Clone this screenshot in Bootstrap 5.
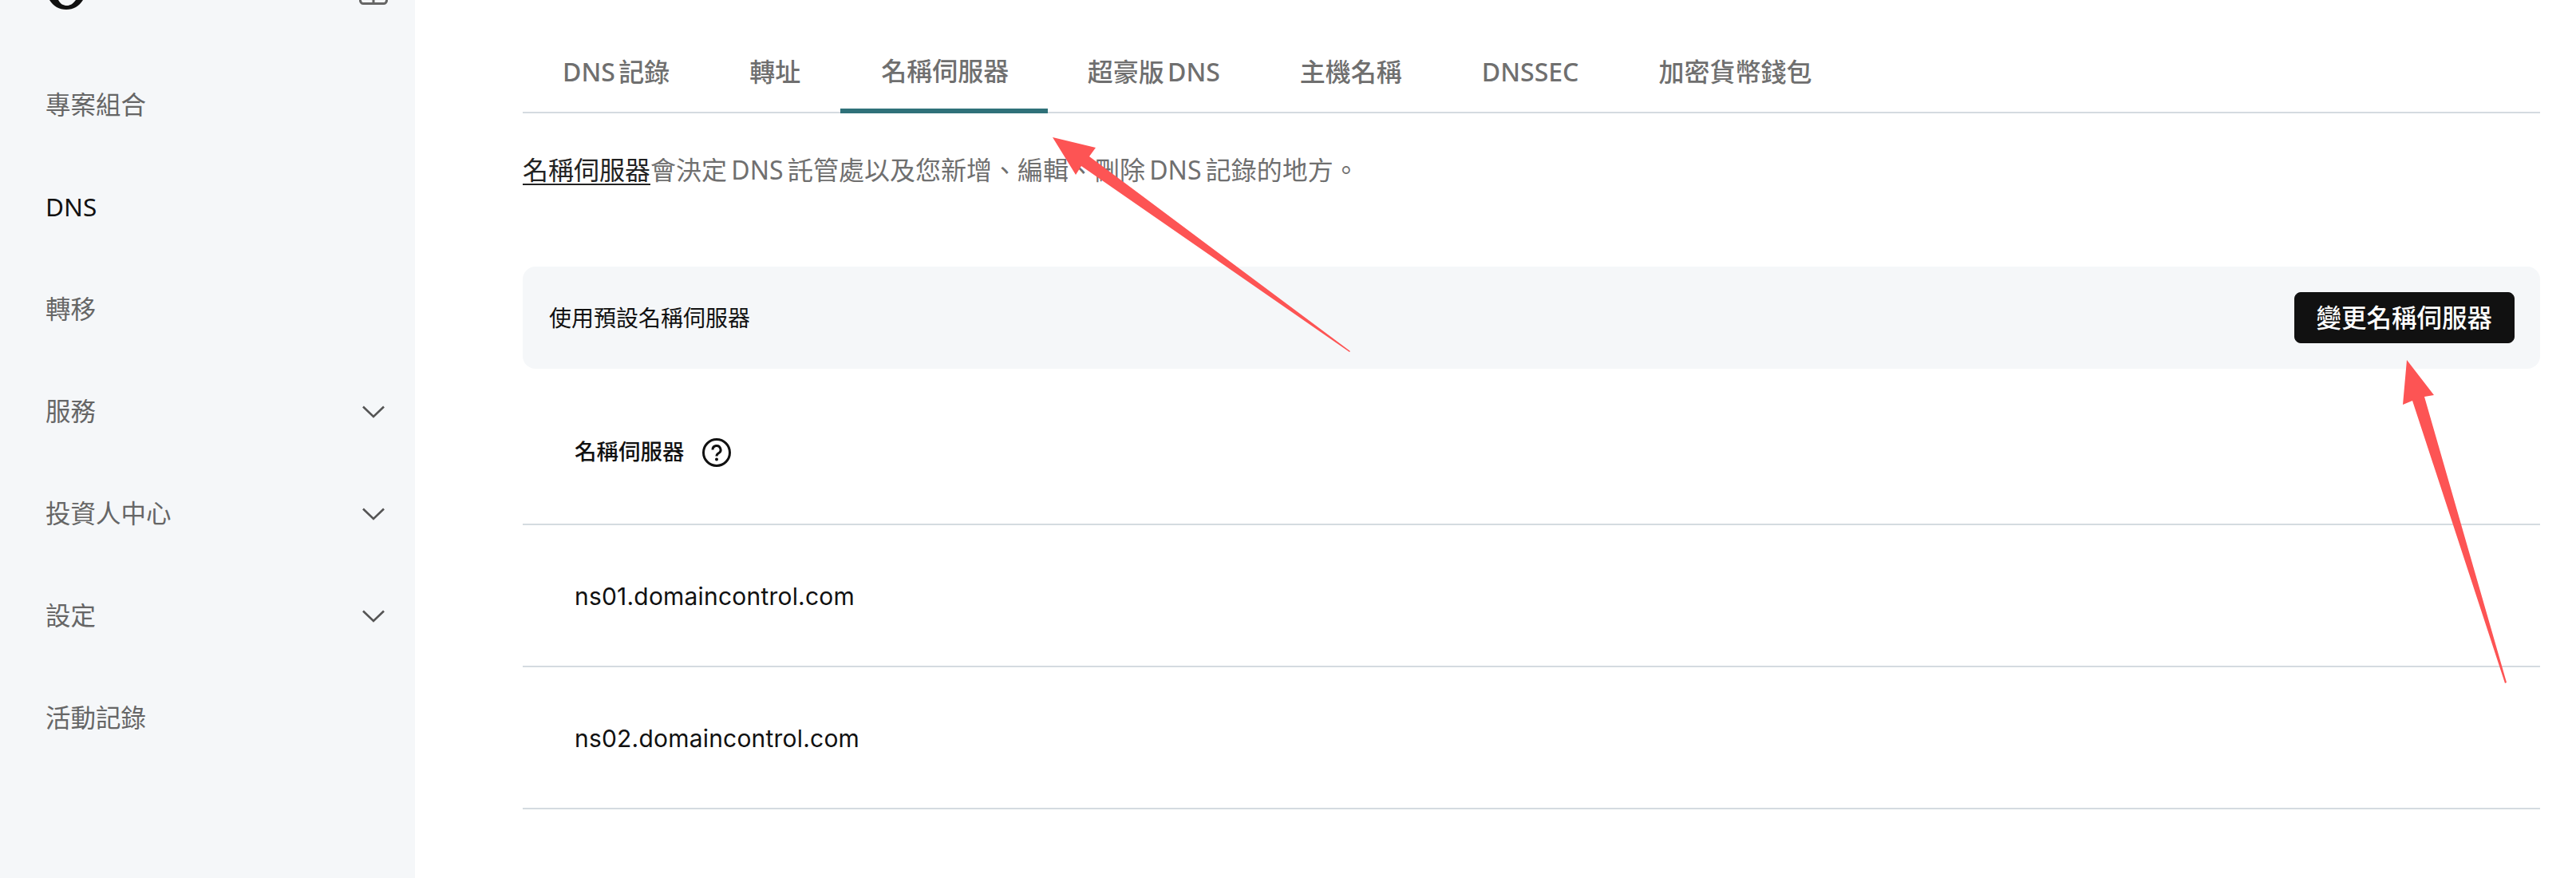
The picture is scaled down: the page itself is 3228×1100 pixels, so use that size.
<!DOCTYPE html>
<html lang="zh-Hant">
<head>
<meta charset="utf-8">
<title>名稱伺服器</title>
<link rel="stylesheet" href="https://cdn.jsdelivr.net/npm/bootstrap@5.3.0/dist/css/bootstrap.min.css">
<style>
:root{--ink:#111;--mute:#6f6f6f;--rule:#d4dbe0;--wash:#f5f7f9;}
html,body{height:1100px;overflow:hidden;}
body{font-family:"Noto Sans","Noto Sans CJK TC",sans-serif;color:var(--ink);background:#fff;}
.shell{width:3228px;height:1100px;}
.side{width:520px;flex:none;background:var(--wash);font-size:31.5px;color:#666;}
.side-head{height:68px;padding:0 34px 0 62px;}
.side-item{height:128px;padding:0 38px 2px 57px;color:#666;text-decoration:none;}
.side-item svg{margin-top:2px;}
.side-item.on{color:var(--ink);}
.main{padding:0 45px 0 135px;min-width:0;}
.tabbar{height:142px;border-bottom:2px solid var(--rule);flex-wrap:nowrap;}
.tabitem{height:142px;padding:44px 50px 0;margin-bottom:-2px;font-size:32px;font-weight:500;word-spacing:-4px;color:var(--mute);line-height:1;border-bottom:6px solid transparent;text-decoration:none;}
.tabitem.on{border-bottom-color:#2f7179;padding-top:41px;padding-left:51px;padding-right:48.500px;}
.intro{height:192px;padding-top:52px;margin:0;font-size:32px;word-spacing:-3px;color:var(--mute);line-height:38px;}
.intro a{color:#222;text-underline-offset:5px;text-decoration-thickness:2px;}
.defaults{height:128px;background:var(--wash);border-radius:16px;padding:0 32.500px 0 33px;font-size:28px;}
.change-btn{--bs-btn-bg:#111;--bs-btn-border-color:#111;--bs-btn-color:#fff;--bs-btn-hover-bg:#111;--bs-btn-hover-color:#fff;height:64px;width:275.500px;border-radius:8px;font-size:31.5px;font-weight:500;padding:0;line-height:1;}
.list-group-flush>.list-group-item.nsrow{height:178px;padding:2px 65px 0;border-width:0 0 2px;border-style:solid;border-color:var(--rule);border-radius:0;font-family:Inter,"Noto Sans CJK TC",sans-serif;font-size:30px;letter-spacing:.2px;color:var(--ink);background:transparent;}
.list-group-flush>.list-group-item.nsrow.head{height:196px;padding-top:15px;font-size:27.5px;font-weight:500;letter-spacing:0;gap:22px;}
.marks{top:0;left:0;pointer-events:none;}
</style>
</head>
<body>
<div class="shell d-flex position-relative">
  <aside class="side d-flex flex-column">
    <div class="side-head d-flex justify-content-between align-items-start">
      <svg width="42" height="12" viewBox="0 0 42 12"><path fill="#111" d="M0 0C5 8 12 12 21 12C30 12 37 8 42 0H33C29 5 26 7 22 7C17 7 14 5 11 0Z"/></svg>
      <svg width="36" height="6" viewBox="0 0 36 6"><path fill="none" stroke="#666" stroke-width="3" d="M1.5 -4V0A4 4 0 0 0 5.500 4.500H30.500A4 4 0 0 0 34.500 0V-4M18 -4V4"/></svg>
    </div>
    <a class="side-item d-flex align-items-center" href="#">專案組合</a>
    <a class="side-item on d-flex align-items-center" href="#">DNS</a>
    <a class="side-item d-flex align-items-center" href="#">轉移</a>
    <a class="side-item d-flex align-items-center justify-content-between" href="#">服務<svg width="28" height="16" viewBox="0 0 28 16"><path fill="none" stroke="#555" stroke-width="2.600" d="M1 1.500L14 14L27 1.500"/></svg></a>
    <a class="side-item d-flex align-items-center justify-content-between" href="#">投資人中心<svg width="28" height="16" viewBox="0 0 28 16"><path fill="none" stroke="#555" stroke-width="2.600" d="M1 1.500L14 14L27 1.500"/></svg></a>
    <a class="side-item d-flex align-items-center justify-content-between" href="#">設定<svg width="28" height="16" viewBox="0 0 28 16"><path fill="none" stroke="#555" stroke-width="2.600" d="M1 1.500L14 14L27 1.500"/></svg></a>
    <a class="side-item d-flex align-items-center" href="#">活動記錄</a>
  </aside>
  <main class="main flex-grow-1">
    <nav class="nav tabbar">
      <a class="tabitem d-flex align-items-center" href="#">DNS 記錄</a>
      <a class="tabitem d-flex align-items-center" href="#">轉址</a>
      <a class="tabitem on d-flex align-items-center" href="#">名稱伺服器</a>
      <a class="tabitem d-flex align-items-center" href="#">超豪版 DNS</a>
      <a class="tabitem d-flex align-items-center" href="#">主機名稱</a>
      <a class="tabitem d-flex align-items-center" href="#">DNSSEC</a>
      <a class="tabitem d-flex align-items-center" href="#">加密貨幣錢包</a>
    </nav>
    <p class="intro"><a href="#">名稱伺服器</a>會決定 DNS 託管處以及您新增、編輯、刪除 DNS 記錄的地方。</p>
    <div class="defaults d-flex align-items-center justify-content-between">
      <span>使用預設名稱伺服器</span>
      <button type="button" class="btn change-btn">變更名稱伺服器</button>
    </div>
    <ul class="list-group list-group-flush">
      <li class="list-group-item nsrow head d-flex align-items-center">名稱伺服器
        <svg width="36" height="36" viewBox="0 0 36 36"><circle cx="18" cy="18" r="16.500" fill="none" stroke="#111" stroke-width="3"/><path fill="none" stroke="#111" stroke-width="3" d="M13 14.500A5 5 0 1 1 20.500 18.800C18.800 19.800 18 20.800 18 22.500"/><circle cx="18" cy="26.500" r="2" fill="#111"/></svg>
      </li>
      <li class="list-group-item nsrow d-flex align-items-center">ns01.domaincontrol.com</li>
      <li class="list-group-item nsrow d-flex align-items-center">ns02.domaincontrol.com</li>
    </ul>
  </main>
  <svg class="marks position-absolute" width="3228" height="1100" viewBox="0 0 3228 1100">
    <polygon fill="#fd5454" points="1319,172 1373,185 1365,196 1692,440 1691,441 1355,208 1348,219"/>
    <polygon fill="#fd5454" points="3016,451 3050,495 3038,497 3141,855 3139,856 3023,502 3011,507"/>
  </svg>
</div>
<script src="https://cdn.jsdelivr.net/npm/bootstrap@5.3.0/dist/js/bootstrap.bundle.min.js"></script>
</body>
</html>
